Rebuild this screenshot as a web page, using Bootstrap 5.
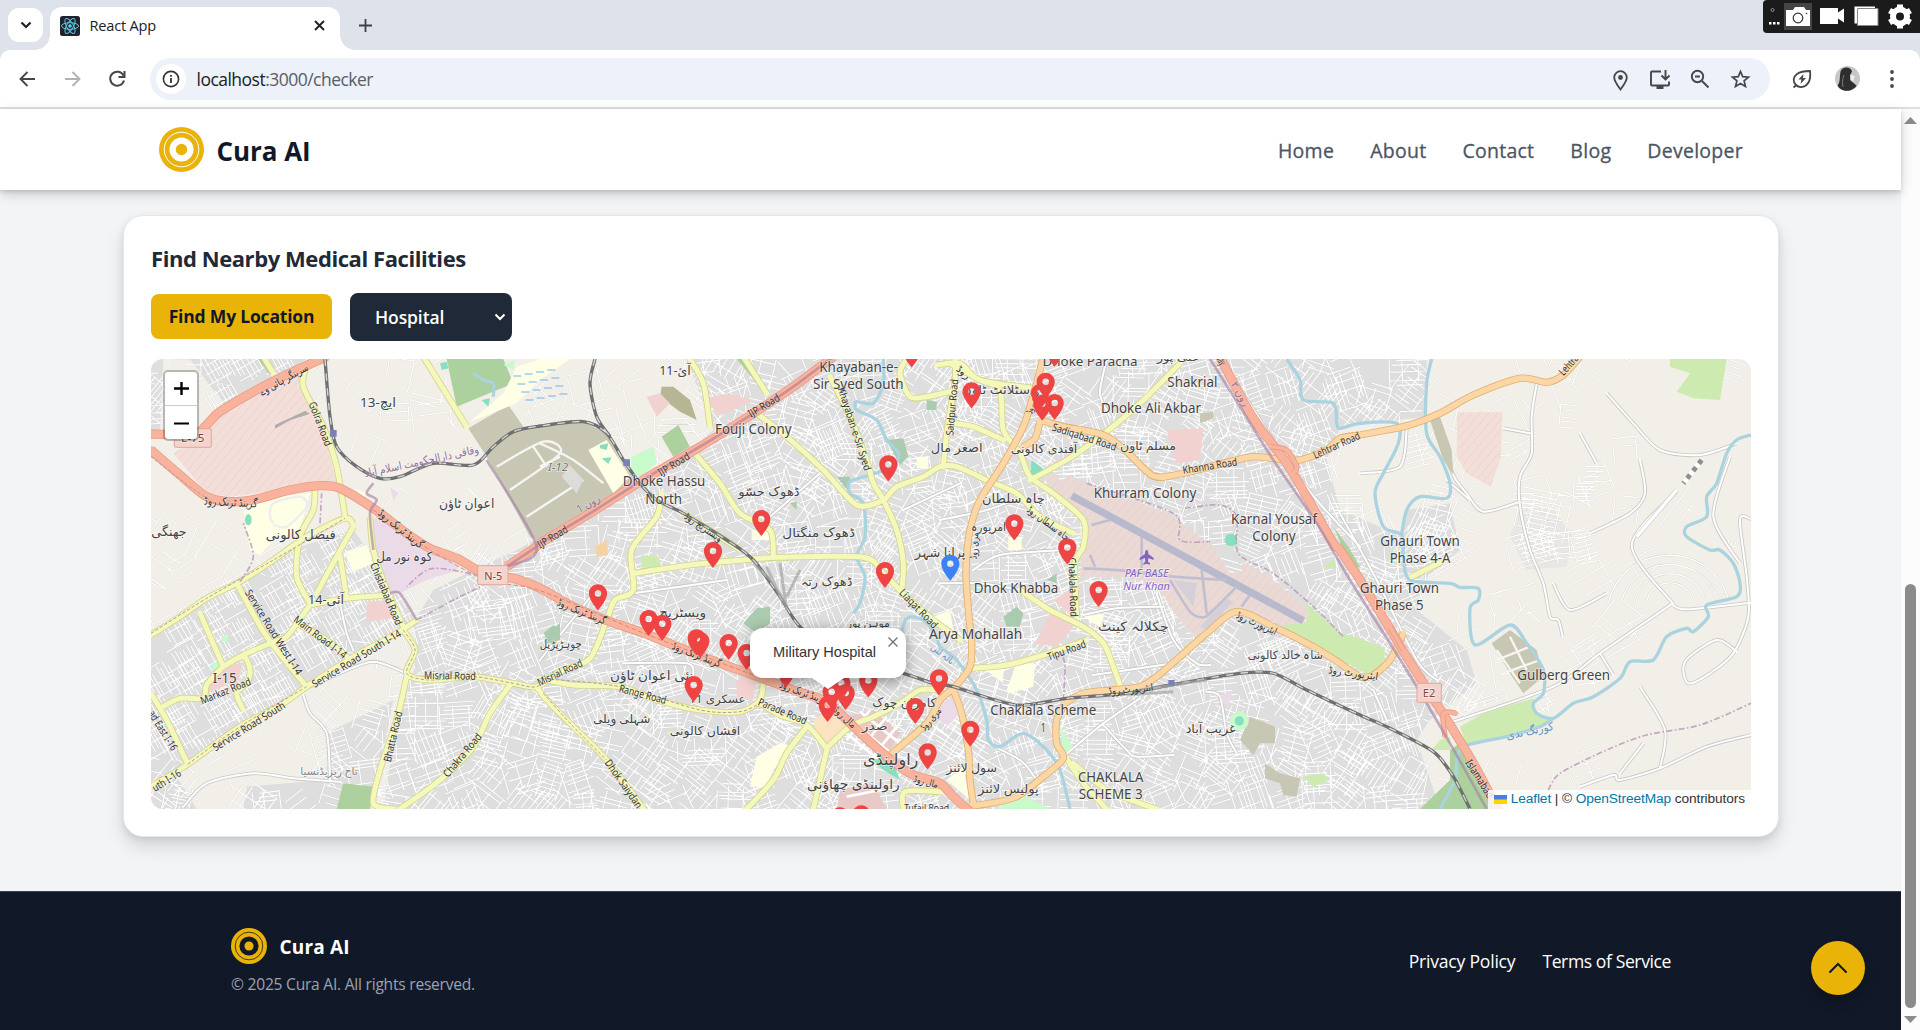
<!DOCTYPE html>
<html lang="en">
<head>
<meta charset="utf-8">
<title>React App</title>
<link rel="stylesheet" href="https://cdn.jsdelivr.net/npm/bootstrap@5.3.0/dist/css/bootstrap.min.css">
<style>
body{height:1030px;width:1920px;overflow:hidden;font-family:"Open Sans","Noto Sans",sans-serif;background:#fff;color:#1f2937}
svg{display:block;flex:none}
.tabstrip{height:50px;background:#dee2ea;padding-left:8px;padding-top:8px}
.tab-search{width:35px;height:34px;border-radius:11px;background:#fff}
.tab-active{position:relative;width:290px;height:43px;margin:-1px 0 0 7px;background:#fff;border-radius:12px 12px 0 0;padding:0 15px 6px 10px}
.tab-active:before,.tab-active:after{content:"";position:absolute;bottom:0;width:15px;height:15px}
.tab-active:before{left:-15px;background:radial-gradient(circle at 0 0,transparent 14.5px,#fff 15px)}
.tab-active:after{right:-15px;background:radial-gradient(circle at 100% 0,transparent 14.5px,#fff 15px)}
.tab-title{font-size:14.6px;letter-spacing:-.2px;color:#202124;margin-left:9.5px}
.capture-bar{position:absolute;right:0;top:0}
.toolbar-wrap{background:#dee2ea}
.toolbar{height:57px;background:#fff;border-radius:10px 10px 0 0;padding-left:15px}
.omnibox{width:1620px;height:42px;border-radius:21px;background:#ecf1fa;padding:0 18px 0 6px}
.info-dot{width:30px;height:30px;border-radius:50%;background:#fff}
.url{font-size:17.5px;letter-spacing:-.52px;color:#5a5d62;padding-top:2px}
.url b{font-weight:400;color:#202124}
.page-line{height:2px;background:#dfdfe0}
.viewport{height:921px}
.page{width:1901px;background:#f3f4f6}
.site-head{height:81px;background:#fff;padding:0 158px 0 159px;position:relative;z-index:2;box-shadow:0 4px 12px rgba(0,0,0,.17),0 2px 4px rgba(0,0,0,.12)}
.brand-name{font-size:26px;font-weight:700;color:#111827;letter-spacing:-.05px;padding-top:4px}
.menu-link{font-size:19.5px;font-weight:500;letter-spacing:.27px;-webkit-text-stroke:.3px #4b5563;color:#4b5563;text-decoration:none;white-space:nowrap;padding-top:3px}
.facility{width:1656px;height:622px;margin:25px 0 0 123px;border:1px solid #e5e7eb;border-radius:20px;background:#fff;padding:26px 27px;box-shadow:0 10px 18px rgba(0,0,0,.12),0 3px 7px rgba(0,0,0,.08)}
.facility h2{font-size:22px;font-weight:700;line-height:36px;letter-spacing:-.43px;margin:-2px 0 17px}
.locate{width:181px;height:45px;border:0;border-radius:8px;background:#eab308;color:#111827;font-weight:700;font-size:17.5px;letter-spacing:-.19px;padding:0;white-space:nowrap;margin-bottom:2px}
.kind{width:162px;height:48px;border-radius:8px;background:#1f2937;color:#fff;font-size:17.5px;font-weight:600;padding:0 6px 0 25px;letter-spacing:-.1px}
.mapbox{width:1600px;height:450px;margin-top:18px;border-radius:12px;overflow:hidden;position:relative;background:#f2efe9}
.zoomer{position:absolute;left:12px;top:11px;width:36px;height:71px;border:2px solid rgba(0,0,0,.24);border-radius:5px;background:#fff;background-clip:padding-box}
.zoomer div{height:34px}
.zoomer div:first-child{border-bottom:1px solid #ccc}
.bubble{position:absolute;left:599px;top:269px;width:156px;height:50px;padding:0 7px 3px 0;border-radius:13px;background:#fff;box-shadow:0 3px 14px rgba(0,0,0,.4);font:14.6px "Liberation Sans",sans-serif;color:#333}
.bubble:after{content:"";position:absolute;left:62px;top:50px;border:16px solid transparent;border-top:11px solid #fff;border-bottom:0}
.bubble svg{position:absolute;right:8px;top:9px}
.credit{position:absolute;right:0;bottom:0;height:19px;padding:0 6px;background:rgba(255,255,255,.8);font:13.7px/18px "Liberation Sans",sans-serif;color:#333;white-space:nowrap;letter-spacing:-.1px}
.credit span{margin-top:-2px}
.credit a{color:#0078a8;text-decoration:none}
.site-foot{height:139px;margin-top:54px;border-top:1px solid #374151;background:#111827;padding:0 230px 0 231px;position:relative}
.foot-name{font-size:19px;font-weight:700;color:#fff;letter-spacing:.15px;padding-top:3px}
.copy{font-size:15.6px;letter-spacing:-.24px;color:#9ca3af;margin-top:8px;line-height:24px}
.foot-link{font-size:17.6px;color:#fff;text-decoration:none;letter-spacing:-.42px;white-space:nowrap}
.foot-link.wide{letter-spacing:-.23px}
.to-top{position:absolute;left:1811px;top:49px;width:54px;height:54px;border-radius:50%;background:#eab308;box-shadow:0 8px 12px rgba(0,0,0,.2)}
.sbar{width:19px;background:#fcfcfc;padding-top:8px}
.sbar i{display:block;width:11px;height:424px;border-radius:6px;background:#8b8b8b;margin-top:460px}
</style>
<script src="https://cdn.jsdelivr.net/npm/bootstrap@5.3.0/dist/js/bootstrap.bundle.min.js"></script>
</head>
<body class="d-flex flex-column">
<div class="tabstrip d-flex align-items-start">
  <div class="tab-search d-flex align-items-center justify-content-center"><svg width="14" height="14" viewBox="0 0 14 14" fill="none" stroke="#202124" stroke-width="2.2"><path d="M2.5 4.5 7 9l4.500-4.500"/></svg></div>
  <div class="tab-active d-flex align-items-center">
    <svg width="20" height="20" viewBox="0 0 20 20"><rect width="20" height="20" rx="2.500" fill="#20232a"/><g fill="none" stroke="#5cc5de" stroke-width="1"><ellipse cx="10" cy="10" rx="8.500" ry="3.300"/><ellipse cx="10" cy="10" rx="8.500" ry="3.300" transform="rotate(60 10 10)"/><ellipse cx="10" cy="10" rx="8.500" ry="3.300" transform="rotate(120 10 10)"/></g><circle cx="10" cy="10" r="1.700" fill="#61dafb"/></svg>
    <span class="tab-title me-auto">React App</span>
    <svg width="11" height="11" viewBox="0 0 11 11" stroke="#202124" stroke-width="1.900"><path d="m1 1 9 9m0-9-9 9"/></svg>
  </div>
  <svg style="margin:11px 0 0 19px" width="13" height="13" viewBox="0 0 13 13" stroke="#3c4043" stroke-width="1.800"><path d="M6.500 0v13M0 6.500h13" /></svg>
  <svg class="capture-bar" width="157" height="33" viewBox="0 0 157 33"><path d="M4 0h153v33H4a4 4 0 0 1-4-4V4a4 4 0 0 1 4-4z" fill="#1b1b1b"/><path d="M21 3h28v27H21z" fill="#444"/><circle cx="9.500" cy="10" r="1.500" fill="none" stroke="#aaa" stroke-width=".8"/><path d="M6 22h2.500v2.500H6zm4 0h2.500v2.500H10zm4 0h2.500v2.500H14zM23 10h7l2-3h9l2 3h4v16H23zM57 8h18v4.500l6-4v14l-6-4V24H57z" fill="#fff"/><circle cx="35" cy="18" r="4.800" fill="#fff" stroke="#333" stroke-width="1.200"/><circle cx="43.500" cy="13.500" r=".8" fill="#333"/><path d="M91.500 6.500H112v17H91.500z" fill="#fff"/><path d="M94.500 8.500H115v17H94.500z" fill="#fff" stroke="#888"/><circle cx="137" cy="16.500" r="7" fill="none" stroke="#fff" stroke-width="6"/><g stroke="#fff" stroke-width="6"><path d="M137 4.500v4m0 16v4M126.600 10.500l3.500 2m13.800 8 3.500 2M126.600 22.500l3.500-2m13.800-8 3.500-2"/></g></svg>
</div>
<div class="toolbar-wrap">
<div class="toolbar d-flex align-items-center">
  <svg width="24" height="24" viewBox="0 0 24 24" fill="none" stroke="#474747" stroke-width="1.900"><path d="M20 12H6M12.500 5l-7 7 7 7"/></svg>
  <svg style="margin-left:21px" width="24" height="24" viewBox="0 0 24 24" fill="none" stroke="#b0b2b5" stroke-width="1.900"><path d="M5 12h14M12.500 5l7 7-7 7"/></svg>
  <svg style="margin-left:21px" width="24" height="24" viewBox="0 0 24 24" fill="none" stroke="#474747" stroke-width="2"><path d="M18.500 8.500A7 7 0 1 0 19 13.500M19.500 4v6h-6"/></svg>
  <div class="omnibox d-flex align-items-center" style="margin-left:21px">
    <div class="info-dot d-flex align-items-center justify-content-center"><svg width="18" height="18" viewBox="0 0 18 18"><circle cx="9" cy="9" r="7.600" fill="none" stroke="#333" stroke-width="1.600"/><path d="M8.100 8h1.800v5H8.100zM8.100 5h1.800v1.800H8.100z" fill="#333"/></svg></div>
    <span class="url me-auto" style="margin-left:10.500px"><b>localhost</b>:3000/checker</span>
    <div class="d-flex gap-3">
    <svg width="24" height="24" viewBox="0 0 24 24"><path d="M12.500 22.500C8.500 17 6.200 14 6.200 10.500a6.300 6.300 0 0 1 12.600 0c0 3.500-2.300 6.500-6.300 12z" fill="none" stroke="#474747" stroke-width="1.800"/><circle cx="12.500" cy="10.500" r="2.400" fill="#474747"/></svg>
    <svg width="24" height="24" viewBox="0 0 24 24" fill="none" stroke="#474747" stroke-width="1.900"><path d="M13 4.500H4a1 1 0 0 0-1 1v12a1 1 0 0 0 1 1h16a1 1 0 0 0 1-1v-3M17.500 3v9M13.500 8.500l4 4 4-4"/><path d="M8.500 20.500h7" stroke-width="3"/></svg>
    <svg width="24" height="24" viewBox="0 0 24 24" fill="none" stroke="#474747" stroke-width="1.900"><circle cx="9.500" cy="9.500" r="5.700"/><path d="m14 14 6.500 6.500M7 9.500h5"/></svg>
    <svg width="24" height="24" viewBox="0 0 24 24" fill="none" stroke="#474747" stroke-width="1.700"><path d="m12.500 4.500 2.200 5.200 5.800.5-4.400 3.700 1.400 5.600-5-3-5 3 1.400-5.600-4.400-3.700 5.800-.5z"/></svg>
    </div>
  </div>
  <svg style="margin-left:20px" width="24" height="24" viewBox="0 0 24 24" fill="none" stroke="#474747" stroke-width="1.800"><path d="M20 4c.5 4 .5 8-1.500 11.500-3 5-9 6-12.500 2.500s-3-8 1-11C10.500 4.500 15 4 20 4zM3.500 20.500 7 17.500"/><path d="m13.500 7-5 5.500h3l-1 4.500 5.500-6h-3z" fill="#474747" stroke="none"/></svg>
  <svg style="margin-left:21px" width="25" height="25" viewBox="0 0 25 25"><circle cx="12.500" cy="12.500" r="12.500" fill="#c7c7c7"/><path d="M5.500 5.500C7 0 16 0 17 5.500l-2 4 .5 5 6 5c-3 6-15 8-19 0 3-3 2-9 3-14z" fill="#2e2e2e"/><path d="M15.500 8.500l4 1.500-1 5-3-1z" fill="#eee"/><path d="M9 9c-1.500 4-2 8-1 12" stroke="#777" fill="none"/></svg>
  <svg style="margin-left:20px" width="24" height="24" viewBox="0 0 24 24" fill="#474747"><circle cx="12" cy="5" r="1.900"/><circle cx="12" cy="12" r="1.900"/><circle cx="12" cy="19" r="1.900"/></svg>
</div></div>
<div class="page-line"></div>
<div class="viewport d-flex">
<main class="page">
  <header class="site-head d-flex align-items-center">
    <svg width="45" height="45" viewBox="0 0 45 45"><circle cx="22.500" cy="22.500" r="22.500" fill="#eab308"/><circle cx="22.500" cy="22.500" r="17.300" fill="none" stroke="#fff"/><circle cx="22.500" cy="22.500" r="12" fill="#fff"/><circle cx="22.500" cy="22.500" r="5.700" fill="#eab308"/></svg>
    <span class="brand-name me-auto" style="margin-left:12.500px">Cura AI</span>
    <nav class="d-flex" style="gap:36px"><a class="menu-link">Home</a><a class="menu-link">About</a><a class="menu-link">Contact</a><a class="menu-link">Blog</a><a class="menu-link">Developer</a></nav>
  </header>
  <section class="facility">
    <h2>Find Nearby Medical Facilities</h2>
    <div class="d-flex align-items-center" style="gap:18px">
      <button class="locate">Find My Location</button>
      <div class="kind d-flex align-items-center justify-content-between"><span>Hospital</span><svg width="12" height="12" viewBox="0 0 12 12" fill="none" stroke="#fff" stroke-width="2"><path d="m1.500 3.500 4.500 4.500 4.500-4.500"/></svg></div>
    </div>
    <div class="mapbox">
      <svg id="map" width="1600" height="450" viewBox="33 27 4800 1350"></svg>
      <div class="zoomer"><div class="d-flex align-items-center justify-content-center"><svg width="15" height="15" viewBox="0 0 15 15" stroke="#000" stroke-width="2.400"><path d="M7.500 1v13M0 7.500h15"/></svg></div><div class="d-flex align-items-center justify-content-center"><svg width="15" height="15" viewBox="0 0 15 15" stroke="#000" stroke-width="2"><path d="M0 7.500h15"/></svg></div></div>
      <div class="bubble d-flex align-items-center justify-content-center">Military Hospital<svg width="10" height="10" viewBox="0 0 10 10" stroke="#757575" stroke-width="1.400"><path d="m.5.5 9 9m0-9-9 9"/></svg></div>
      <div class="credit d-flex align-items-center"><svg class="me-1" width="13" height="9" viewBox="0 0 13 9"><path fill="#4c7be1" d="M0 0h13v5H0z"/><path fill="#ffd500" d="M0 4.500h13V9H0z"/></svg><span><a href="#">Leaflet</a> | © <a href="#">OpenStreetMap</a> contributors</span></div>
    </div>
  </section>
  <footer class="site-foot d-flex align-items-center justify-content-between">
    <div class="d-flex flex-column" style="padding-top:2px">
      <div class="d-flex align-items-center"><svg width="36" height="36" viewBox="0 0 45 45"><circle cx="22.500" cy="22.500" r="22.500" fill="#eab308"/><circle cx="22.500" cy="22.500" r="17.300" fill="none" stroke="#111827"/><circle cx="22.500" cy="22.500" r="12" fill="#111827"/><circle cx="22.500" cy="22.500" r="5.700" fill="#eab308"/></svg><span class="foot-name" style="margin-left:12.500px">Cura AI</span></div>
      <div class="copy">© 2025 Cura AI. All rights reserved.</div>
    </div>
    <div class="d-flex" style="gap:27px"><a class="foot-link wide">Privacy Policy</a><a class="foot-link">Terms of Service</a></div>
    <div class="to-top d-flex align-items-center justify-content-center"><svg width="20" height="20" viewBox="0 0 20 20" fill="none" stroke="#111827" stroke-width="2" stroke-linecap="round"><path d="m2 14 8-8 8 8"/></svg></div>
  </footer>
</main>
<aside class="sbar d-flex flex-column align-items-center"><svg width="13" height="7" viewBox="0 0 13 7"><path fill="#8b8b8b" d="M6.500 0 13 7H0z"/></svg><i></i><svg style="margin-top:8px" width="13" height="7" viewBox="0 0 13 7"><path fill="#8b8b8b" d="M6.500 7 13 0H0z"/></svg></aside>
</div>
<script>
// The map is laid out in four sheets A-D, each 1200 units wide.
const out=[];let seed=7;
const rnd=()=>(seed=(seed*16807)%2147483647)/2147483647;
const OFF={A:0,B:1200,C:2400,D:3600};
const pts=s=>OFF[s[0]]===undefined?[]:s.split(/(?=[ABCD])/).flatMap(q=>q.slice(1).trim().split(/\s+/).map(p=>{const a=p.split(',').map(Number);return[a[0]+OFF[q[0]],a[1]]}));
const poly=s=>'M'+pts(s).map(p=>p.join()).join('L')+'Z';
const curve=s=>{const p=pts(s);let d='M'+p[0];for(let i=0;i<p.length-1;i++){const a=p[i-1]||p[i],b=p[i],c=p[i+1],e=p[i+2]||c;d+=`C${[b[0]+(c[0]-a[0])/7,b[1]+(c[1]-a[1])/7,c[0]-(e[0]-b[0])/7,c[1]-(e[1]-b[1])/7,c[0],c[1]].map(v=>v.toFixed(1))}`}return d};
const fill=(c,...l)=>out.push(`<path fill="${c}" d="${l.map(poly).join('')}"/>`);
const line=(d,c,w,x='')=>out.push(`<path fill="none" stroke="${c}" stroke-width="${w}" stroke-linejoin="round" ${x} d="${d}"/>`);
const road=(l,edge,core,w)=>{const d=l.map(curve).join('');line(d,edge,w);line(d,core,w-5,'stroke-linecap="round"')};
const inside=(x,y,P)=>{let r=false;for(let i=0,j=P.length-1;i<P.length;j=i++){const a=P[i],b=P[j];if((a[1]>y)!==(b[1]>y)&&x<(b[0]-a[0])*(y-a[1])/(b[1]-a[1])+a[0])r=!r}return r};

const towns=[
 'A820,820 880,720 1000,660 1190,590 B300,400 450,300 520,240 440,27 D260,27 255,200 0,230 -40,330 0,480 190,560 200,480 330,460 360,600 250,690 230,780 380,900 410,1000 270,1110 230,1170 300,1377 A730,1377 770,1110 820,970 830,900',
 'A33,860 200,740 300,690 480,590 640,540 770,720 830,810 500,1010 140,1245 33,1310',
 'A150,27 500,27 400,90 250,160','A320,1310 560,1290 560,1150 660,1100 760,1050 720,1260 690,1377 310,1377','A33,1330 110,1280 170,1377 33,1377','A1000,660 1130,600 1200,560 1260,720 1100,700','A33,27 70,27 60,240 33,240',
 'D510,560 540,470 640,480 700,560 680,650 560,660'];
towns.slice(0,7).forEach(t=>fill('#dedede',t));
fill('#e9e7e3',towns[7]);
let streets='';
const seg=(a,b,c,d)=>streets+=`M${a.toFixed(0)},${b.toFixed(0)}L${c.toFixed(0)},${d.toFixed(0)}`;
const block=(cx,cy,w,h,ang,sp,keep=.8)=>{const t=ang*Math.PI/180,C=Math.cos(t),S=Math.sin(t),q=(u,v)=>[cx+u*C-v*S,cy+u*S+v*C];
 for(let v=-h/2;v<=h/2;v+=sp*(.7+rnd()*.6))if(rnd()<keep)seg(...q(-w/2*(.5+rnd()*.5),v),...q(w/2*(.4+rnd()*.6),v));
 for(let u=-w/2;u<=w/2;u+=sp*(2+rnd()*2.5))seg(...q(u,-h/2*(.6+rnd()*.5)),...q(u,h/2*(.6+rnd()*.5)));};
const TP=towns.map(pts);
for(let x=40;x<4850;x+=92)for(let y=40;y<1390;y+=88){const px=x+rnd()*40-20,py=y+rnd()*40-20;
 const k=TP.findIndex(P=>inside(px,py,P));
 if(k===1||k===2)block(px,py,100,95,60,12,.9);
 else if(k>=0)block(px,py,88+rnd()*60,75+rnd()*60,[-25,12,65,-8,30,-60][Math.floor(rnd()*6)]+rnd()*10,11+rnd()*9,.78);
 else if(px<1250&&rnd()<.6||px>1300&&px<4500&&rnd()<.35)block(px,py,70+rnd()*60,60+rnd()*70,rnd()*90-45,24+rnd()*14,.55);}
// planned estates on the eastern side
[[230,310,110,110,-15,15],[270,540,120,120,-65,12],[300,620,150,90,-30,12],[610,500,160,150,12,14],[580,600,150,110,-15,13],[740,590,80,110,-15,14],[760,370,80,80,0,17],[735,430,70,60,0,13],[690,200,60,70,5,17],[1180,70,60,70,20,17],[430,1060,150,30,-17,10],[620,1050,50,50,-30,12],[560,460,100,60,0,14],[760,690,210,120,-30,38],[860,860,220,60,-30,35],[720,930,180,70,-30,34],[1010,510,230,60,-52,38],[920,640,80,60,-30,25],[1190,580,20,50,-80,30]].forEach(b=>block(b[0]+3600,b[1],...b.slice(2),1));
line(streets,'#c9c8c7',5,'opacity=".6"');line(streets,'#fff',3.4);
for(let i=0;i<4;i++){const r=70+i*38;line(`M${4590-r},${760}A${r},${r*.95} 0 0 1 ${4590+r*.95},${745}`,'#cfcfcf',6);line(`M${4590-r},${760}A${r},${r*.95} 0 0 1 ${4590+r*.95},${745}`,'#fff',4);}
road(['D280,210 310,300 345,385 380,430 430,485 540,455','D590,100 575,200 575,310 540,380 540,470 570,600 610,700 630,800 655,810 668,860','D900,330 915,430 870,490 750,550','D998,760 875,585 1010,425','D998,760 780,910 640,1010 340,1115','D1000,765 1040,778 1233,758','D1233,507 1200,510 1220,680 1225,800 1180,910 1110,970 1045,1000 1035,935 1130,870 1190,905','D780,910 820,975','D720,1310 820,1275 840,1290 960,1255 1100,1190 1233,1155','A490,1035 510,1090 560,1150 570,1290','A130,1370 200,1300 340,1270 460,1285 600,1295','A510,1010 600,970 700,935 800,970','C370,1220 490,1120 600,1045','C490,1125 560,1200 590,1220 700,1215','C650,730 700,870 770,940 810,945','C430,795 530,775 670,770','C800,1025 840,1040 860,1150 890,1210','C500,30 480,130 510,200','B690,500 840,370','B0,930 160,730','B1090,480 1260,400','C0,510 140,480 250,440','C100,660 180,615 370,600','C460,975 700,940','B250,940 440,940 460,980','B280,730 560,690','C120,1170 240,1230 290,1290','D0,490 110,690 230,930 290,990','D140,1110 100,1020','D320,390 390,450','C0,700 120,700 240,720','A600,760 620,850 640,900','C1260,590 1130,450 1020,300 890,100 850,30','D640,700 690,780 800,730','D800,130 880,220 960,300 1080,315 1190,280','D1170,320 1120,500 1200,640','D60,370 180,350 200,240','D490,235 570,250','D960,1255 975,1140 900,1010','D720,250 770,340','D910,1180 840,1270'],'#c9c8c7','#fff',11);
line(curve('D1085,330 1030,400'),'#fff',15);line(curve('D1085,330 1030,400'),'#8f8f8f',15,'stroke-dasharray="14 14"');line(curve('D1010,420 890,560'),'#ccc',14);line(curve('D1010,420 890,560'),'#fff',10);

fill('#f3dfd9','A100,310 180,260 240,190 350,130 500,60 490,120 550,240 590,400 540,405 270,440 200,430','D352,187 487,187 483,320 452,410 380,370 350,320');
out.push('<defs><pattern id="hz" width="20" height="20" patternUnits="userSpaceOnUse" patternTransform="rotate(-50)"><path d="M0 0H20" stroke="#eebdb5" stroke-width="2"/></pattern></defs>');
fill('url(#hz)','A100,310 180,260 240,190 350,130 500,60 490,120 550,240 590,400 540,405 270,440 200,430','D352,187 487,187 483,320 452,410 380,370 350,320');
fill('#ebdbe8','A700,510 720,490 850,590 970,640 940,665 860,690 780,730 750,730 710,640','A750,410 775,430 760,450','C0,1060 40,1040 60,1090 10,1125 0,1110','C840,1040 880,1020 860,1075','B1200,1060 1240,1040 1260,1090 1220,1130');
fill('#c7c7b4','A985,235 1105,165 1150,230 1200,228 B130,215 200,250 240,330 290,400 150,480 0,575 -30,560 -160,320','D455,880 510,840 590,900 610,980 550,1030 510,970','D270,210 300,200 335,300 340,375 310,330','C930,1100 1005,1130 1005,1180 960,1180 940,1215 900,1170','C975,1240 1020,1270 1080,1285 1070,1340 1030,1335 1020,1300 975,1285','C780,190 820,185 820,205 780,220');
line(['A1070,350 1210,275 1260,310 1110,420','A1180,290 1220,350','A1160,500 1330,390','B0,280 100,330 190,400','B0,350 60,320','D470,900 540,1000','D470,930 570,890','D510,860 560,960','D490,970 600,930'].map(curve).join(''),'#f6f5f2',7);
fill('#b5b693','B365,110 400,110 450,150 470,210 420,185 360,140');
fill('#dcdcd8','B65,380 90,345 130,390 110,430');
fill('#add19e','A920,27 1090,27 1120,100 950,170','A590,1377 610,1300 700,1310 690,1377','A355,27 375,27 400,75 385,70','B365,260 415,225 450,290 400,320','B590,27 620,27 665,90 650,100','D240,1377 330,1290 330,1200 360,1180 480,1377','D0,560 75,690 60,690 0,595','C1180,530 1225,590 1260,650 1240,660');
fill('#ffffe5','A990,215 1090,130 1130,50 1200,27 B90,27 0,90 -70,160','A310,480 410,440 510,430 480,540 400,570 360,615 330,600','A615,605 680,585 700,640 640,665','A645,415 680,430 670,445','B145,300 200,270 270,380 220,430','B630,1310 650,1220 720,1180 760,1190 700,1260 680,1310','C130,955 190,945 190,1000','C200,1020 230,940 285,940 280,1010 210,1030','C20,1290 70,1250 90,1350','B635,570 635,540 690,545 690,570','B1130,320 1165,320 1165,355 1130,355','C205,560 245,560 245,600 205,600','C430,800 495,790 480,830','B1180,800 1230,780 1240,840');
line(curve('A400,520 390,500 400,460 480,440 500,470 440,530 400,525'),'#eee',7);
fill('#f2d2d0','A680,755 750,750 755,805 680,815','A200,1030 225,960 310,935 295,990','B320,140 360,130 390,160 350,200','B500,145 560,130 640,150 560,190 530,195','B590,990 650,970 640,1050 590,1040','C285,880 340,770 400,830 350,890','C340,750 400,715 400,800','C680,240 790,235 780,330 710,340');
fill('#e8c9c6','B880,1110 1000,1080 1080,1150 1040,1220 960,1160','B900,1320 1000,1300 1040,1377 890,1377');
line('M2095,1130L2235,1245M2125,1105L2260,1215M2160,1085L2280,1180M2120,1170L2190,1080M2160,1200L2240,1100M2195,1225L2270,1130M2120,1340L2220,1320','#fff',8);
fill('#fbe2c0','B820,1110 870,1080 930,1130 870,1190 830,1150');fill('#f3d3a4','B165,590 200,570 205,615 170,620');
fill('#aacbaf','B610,820 650,775 690,770 690,820 650,850','B1040,270 1090,265 1105,320 1080,345','B890,380 930,380 930,430','B15,850 60,820 60,870 20,880','C190,800 230,770 250,790 240,830 200,830','C320,690 350,670 350,700','B1160,150 1190,155 1190,180 1160,180','A1210,850 1240,825 1260,850 1240,890','B750,460 770,455 770,480');
fill('#88dfbf','C270,380 275,330 315,360 300,380','B1000,1230 1050,1215 1080,1290 1030,1260','B180,285 205,280 200,300 180,295','B185,325 215,322 205,342','A900,40 920,35 925,55 905,60','A1025,150 1050,145 1045,170');
fill('#c8facc','B275,320 340,290 350,340 300,380 275,370','C360,1130 400,1190 370,1215','C190,1360 260,1340 330,1377 180,1377','A215,940 240,935 235,965 215,960','A240,870 265,850 265,880','A1090,45 1125,30 1120,60');
fill('#cdebb0','C1020,828 1100,815 1100,760 1200,850 D60,865 135,895 130,950 80,970 0,930','D360,1130 430,1090 580,1045 590,1090 640,1105 610,1130 380,1185','D990,27 1160,27 1140,150 1060,145 1010,125 1050,70 990,50','C1090,1280 1150,1270 1170,1290 1120,1310','B305,615 355,620 365,655 305,660','C1145,650 1180,630 1190,655','D275,1200 300,1170 330,1160 330,1200');
out.push('<g fill="#88dfbf"><circle cx="3273" cy="570" r="19"/><circle cx="3298" cy="1113" r="28" fill="#c8facc"/><circle cx="3298" cy="1113" r="14"/><ellipse cx="325" cy="509" rx="10" ry="17"/></g>');
const air='C310,380 350,370 360,395 390,375 440,400 560,440 700,500 820,590 870,670 905,668 910,635 1000,690 1060,740 1110,790 1090,820 1030,825 890,785 770,870 690,770 650,700 540,680 420,680 430,590 440,520 400,480 340,430';
fill('#eadad6',air);fill('url(#hz)',air);
line('M2795,437L3490,812','#b9b9ce',22);
line(curve('C430,655 550,662 700,680 860,690')+curve('C605,560 605,655')+curve('C455,525 510,510')+curve('C450,615 465,650')+curve('C785,660 800,790')+curve('C690,690 750,785 790,802 820,780 890,710')+curve('C905,770 930,735'),'#c0bfd2',8);
fill('#d5cfd8','C700,690 770,700 760,770','C780,830 860,745 880,755 800,840');
for(let i=0;i<16;i++){const x=1120+(i%4)*34+Math.floor(i/4)*12,y=60+Math.floor(i/4)*24+(3-i%4)*6;line(`M${x},${y}h24`,'#6db3ef',3)}
line(curve('A1000,70 1030,90 1060,100 1060,140'),'#aad3df',9);

line(['B1030,27 1030,100 1000,160 950,155 950,180 1010,210 1040,270 1075,310 1060,350 990,375 930,395 930,430 970,460 975,560 950,620 975,680 960,760 940,790','B1080,870 1100,805 1150,810 1190,860 C0,890 50,930 110,1020 140,1110 145,1170 180,1190 250,1150 320,1200 360,1260 390,1377','C1040,27 1080,90 1090,150 1180,160 1190,220 D0,235 60,220 170,220 175,280 130,370 105,430 130,530 185,555 190,620 210,690 330,700 360,712 415,715 415,750 390,775 405,885 510,825 560,880 610,960 610,1030 580,1060 590,1090 640,1105 700,1060 760,1040 840,985 870,935 940,930 980,860 1040,835 1060,845 1105,800 1100,765 1190,740 1200,700 1180,640 1140,600 1110,600 1040,560 1040,530 1100,500 1100,440 1130,400 1160,310 1190,270 1233,255','D275,27 260,100 260,250 300,320 330,400 320,445 240,440 200,480 185,555','D640,1105 600,1130 500,1160 370,1190 350,1240 345,1290 300,1377'].map(curve).join(''),'#aad3df',10);
road(['A500,45 490,110 550,230 590,350 615,500','A525,420 520,480 480,560 470,680 510,760','A640,530 590,620 530,730','A600,615 610,680 620,745','A510,765 620,745 750,735','A33,855 120,800 200,745 300,695 400,630 500,560 615,505 640,525','A290,700 380,860 500,1010','A510,765 470,820 440,860 390,880 310,915 250,950','A180,790 215,870 250,950','A690,500 700,600 740,720 790,830','A830,810 770,850 650,915 500,1010 430,1060 300,1130 140,1245 33,1310','A33,1030 80,1110 140,1235','A60,1075 120,1045 190,1045 200,1005 250,950 310,920 330,960 320,1000 290,1030 310,1080','A470,820 560,870 620,920','A790,840 825,900 800,970 870,990 1000,980 1120,1000 1190,1010 B60,965 150,925 200,810 225,750 280,720 275,600 350,500 365,430','A800,980 770,1110 720,1260 700,1360 760,1377','A1110,1005 1050,1090 1000,1190 900,1290 780,1377','A1190,1010 B20,1050 100,1130 200,1230 320,1390','A850,20 980,230','A370,20 400,70',
'B445,20 490,100 510,230','B465,310 540,400 600,490 690,540 700,620','B280,670 450,645 610,630 720,622 970,622 1030,670 1090,730 1180,810 1260,870','B610,20 680,130','B650,190 740,260 850,360 950,465 1030,450 1070,410 1150,380 C0,350 50,350 150,395 230,430 300,500 400,550','B870,80 930,200 980,330 1000,400 1030,450 1070,540 1090,640 1085,730','B1100,27 1080,70 1110,140 1160,140 1230,125','B1245,30 1245,90 1220,250 1210,350','B0,985 100,1005 240,1010 350,1050 480,1080 600,1085 660,1050 670,990','B660,1060 720,1095 800,1125 860,1195','B860,1195 930,1130 1000,1100 1080,1060 1140,1020 1200,1020','B800,1130 740,1210 700,1290 620,1377','B860,1200 840,1290 820,1377','B1090,1377 1095,1325 1200,1325',
'C30,40 120,90 180,120 190,240 240,310 270,380 340,430 430,510 430,590 405,640 410,800','C270,390 380,330 480,260 600,160 720,40','C-10,45 60,40 120,90 280,115','C240,720 330,780 430,830 490,880 520,950 540,1005','C90,955 200,945 310,915 440,870','C380,1225 430,1300 500,1377','C400,1240 500,1320 600,1360 650,1377','C40,220 100,230 190,270','D215,680 305,635','B600,600 540,560 430,490'],'#d3d38d','#f5f8bb',20);
road(['C300,210 370,230 490,255 560,305 640,378 720,372 830,345 940,320 1020,328 1080,330 1160,300 1200,265 D60,255 140,240 210,225 300,190 400,135 540,85 620,97 670,75 720,20','C310,20 290,100 250,230 190,340 120,450 90,540 78,660 85,780 95,880 90,950 50,1005 0,1050 B1160,1120 1050,1215','C300,215 285,265 250,290','C375,1060 430,1030 520,1020 600,1010 650,980 720,920 800,850 890,785 1000,830 1120,890 1200,940 D60,980 100,975 150,930 190,850','C375,1060 350,1110 350,1180 370,1225 310,1280 230,1340 150,1360 90,1368','C40,1020 65,1090 85,1200 90,1290 100,1360'],'#dfb070','#fcd6a4',22);
road(['A33,252 105,255 150,270 200,225 240,185 350,120 470,60 560,20','A33,300 120,375 200,440 270,455 350,447 450,420 540,407 600,415 700,475 800,550 870,595 950,625 1040,675 1120,685 1200,715 B100,770 210,815 300,845 400,885 500,925 640,975 760,1020 860,1055 920,1110 1000,1185 1060,1235 1120,1275 1200,1300 C40,1340 90,1385','A1100,650 1190,590 B0,580 150,490 300,395 480,290 640,190 760,110 880,20','C830,0 860,60 940,205 1040,340 1100,440 1180,580 D0,600 60,690 140,820 200,920 270,1030 340,1140 400,1240 480,1390'],'#e99c87','#f9b29c',28);
road(['D150,830 190,900','D315,1160 310,1090 350,1090','C990,290 1040,300 1070,350 1060,370'],'#e99c87','#f9b29c',16);
line(curve('A1100,650 1190,590 B0,580 150,490 300,395 480,290 640,190 760,110 880,20'),'#a87a9a',8,'opacity=".6"');
line(['B640,975 480,915 300,845 0,722 A1040,690 870,600 700,480'].map(curve).join(''),'#d98b78',3,'stroke-dasharray="14 7"');
// administrative boundaries
line(['C810,27 900,170 1000,330 1130,520 D30,690 200,960 330,1180 440,1377','A1100,650 1190,590 1040,330','A700,400 680,430 710,450 690,490 700,600','A830,810 780,730 750,730'].map(curve).join(''),'#a684a6',8,'opacity=".65"');
line(['D625,1320 660,1270 800,1200 920,1155 1080,1125 1233,1060','A830,810 940,750 1040,690 880,655 800,710','C440,400 700,490 C720,570 810,575','C735,475 840,465 890,500 895,610 1000,670 1120,770 1210,860','A300,695 340,620 310,520','C370,1050 375,950 365,910','A540,520 545,430'].map(curve).join(''),'#b795b7',5,'stroke-dasharray="18 7 5 7" opacity=".8"');
line(['A33,320 150,410 240,470','A790,840 825,900 800,970 870,990 1000,980 1120,1000 1190,1010 B60,965','A33,850 200,745 400,630 615,505','A500,1010 300,1130 140,1245','B0,985 240,1010 480,1080 600,1085 660,1060','B10,1030 100,1130 200,1230'].map(curve).join(''),'#b79a9a',3,'stroke-dasharray="10 6"');
const rail=['A555,27 570,200 590,290 650,350 720,385 780,380 880,340 1000,345 1060,290 1120,245 B0,228 130,215 200,250 250,330 300,400 350,450 430,490 560,570 640,630 720,740 780,830 900,920 1090,970 1180,1000 C40,1010 230,1065 380,1045 560,1030 690,1005 900,970 1000,970 1100,1020 D60,1095 150,1135 280,1205 340,1280 390,1377','B165,27 150,100 170,200 210,260'].map(curve).join('');
line(rail,'#707070',10);line(rail,'#d8d8d8',4,'stroke-dasharray="22 22"');
line(['B640,640 700,700 740,770','B780,660 740,740','B680,650 730,760','B720,640 740,780','C600,1020 800,990','C560,1035 700,1025'].map(curve).join(''),'#a5a5a5',9,'opacity=".7"');
fill('#7b80b5','A570,240 590,240 590,260 570,260','B250,328 270,328 270,348 250,348','C685,990 704,990 704,1007 685,1007');
out.push('<g fill="#aeaeae"><path d="M405,225l90-42 15 8-60 20-45 25z"/></g><g fill="#f3d3cc" stroke="#dfa89d" stroke-width="3"><rect x="103" y="236" width="111" height="56" rx="4"/><rect x="1013" y="647" width="91" height="57" rx="4"/><rect x="3831" y="1000" width="73" height="57" rx="4"/></g>');
out.push('<path fill="#8461c4" d="M3020,600c4 0 5 5 5 12l16 12v6l-16-6-1 11 6 5v4l-10-3-10 3v-4l6-5-1-11-16 6v-6l16-12c0-7 1-12 5-12z"/>');
// k, x, y, text, length, size, rotation, colour
const T=[['A',714,170,'ایچ-13',108,38],['A',980,474,'اعوان ٹاؤن',166,38],['A',87,557,'جھنگی',106,38],['A',482,566,'فیصل کالونی',210,38],['A',793,634,'کوہ نور مل',168,38],['A',558,762,'آئی-14',108,38],['A',254,999,'I-15',72,40],['A',567,1276,'تاج ریزیڈنسیا',172,32,0,'#888'],
['A',1060,690,'N-5',54,34,0,'#7a3b2e'],['A',158,276,'E-75',70,34,0,'#7a3b2e'],['A',845,343,'وفاقی دارالحکومت اسلام آباد',350,30,-12,'#93719a'],
['A',432,97,'سرینگر ہائی وے',160,28,-29,'#333'],['A',272,466,'گرینڈ ٹرنک روڈ',160,30,3,'#333'],['A',782,545,'گرینڈ ٹرنک روڈ',165,30,39,'#333'],['A',540,230,'Golra Road',140,28,69,'#333'],['A',738,740,'Chistiabad Road',200,28,67,'#333'],['A',400,855,'Service Road West I-14',295,28,58,'#333'],['A',540,870,'Main Road I-14',190,28,37,'#333'],['A',650,935,'Service Road South I-14',305,28,-31,'#333'],['A',327,1138,'Service Road South',250,28,-32,'#333'],['A',257,1032,'Markaz Road',160,28,-22,'#333'],['A',68,1150,'ad East I-16',135,28,58,'#333'],['A',80,1300,'uth I-16',95,28,-32,'#333'],['A',930,986,'Misrial Road',155,28,1,'#333'],['A',760,1168,'Bhatta Road',155,28,-77,'#333'],['A',968,1224,'Chakra Road',160,28,-50,'#333'],
['B',405,76,'آئ-11',95,38],['B',54,363,'I-12',60,32,0,'#777','i'],['B',640,253,'Fouji Colony',230,40],['B',372,409,'Dhoke Hassu',248,40],['B',371,461,'North',110,40],['B',956,66,'Khayaban-e-',236,40],['B',955,118,'Sir Syed South',272,40],['B',687,438,'ڈھوک حسّو',184,36],['B',836,560,'ڈھوک منگتال',218,36],['B',860,707,'ڈھوک رتہ',155,36],['B',428,800,'ویسٹریج',140,36],['B',62,893,'چوہڑپڑپل',126,34],['B',335,990,'نئی اعوان ٹاؤن',250,38],['B',245,1118,'شہلی ویلی',172,36],['B',495,1154,'افشاں کالونی',212,36],['B',532,1060,'عسکری 11',170,34],['B',985,832,'موہن پور',130,34],['B',1093,1071,'کامران چوک',192,36],['B',1004,1140,'صدر',78,34],['B',1052,1244,'راولپنڈی',166,48],['B',940,1318,'راولپنڈی چھاؤنی',278,40],['B',1200,620,'پرانا شہر',152,38],['B',1250,305,'اصغر مال',155,36],
['B',38,570,'IJP Road',100,28,-31,'#333'],['B',402,352,'IJP Road',105,28,-31,'#333'],['B',672,176,'IJP Road',105,28,-31,'#333'],['B',145,470,'زون 1',75,28,-30,'#93719a'],['B',125,793,'گرینڈ ٹرنک روڈ',155,28,22,'#333'],['B',470,923,'گرینڈ ٹرنک روڈ',155,28,21,'#333'],['B',790,1036,'گرینڈ ٹرنک روڈ',150,28,20,'#333'],['B',490,540,'ویسٹریج روڈ',130,26,34,'#333'],['B',60,977,'Misrial Road',145,28,-25,'#333'],['B',308,1042,'Range Road',145,28,15,'#333'],['B',727,1093,'Parade Road',155,28,23,'#333'],['B',250,1310,'Dhok Saiydan',170,28,55,'#333'],['B',943,245,'Khayaban-e-Sir Syed',260,27,72,'#333'],['B',1237,180,'Saidpur Road',170,27,-85,'#333'],['B',1135,785,'Liaqat Road',150,28,46,'#333'],['B',915,1110,'مال روڈ',80,26,42,'#333'],['B',1158,1303,'مال روڈ',75,26,15,'#333'],['B',1172,1115,'مری روڈ',80,26,-50,'#333'],['B',1160,1382,'Tufail Road',135,28,0,'#333'],['B',1208,920,'نالہ لئی',80,26,38,'#5f93c4'],
['C',450,47,'Dhoke Paracha',285,38],['C',757,111,'Shakrial',150,40],['C',633,190,'Dhoke Ali Akbar',300,40],['C',615,443,'Khurram Colony',308,40],['C',1002,522,'Karnal Yousaf',258,40],['C',1002,574,'Colony',130,40],['C',228,728,'Dhok Khabba',254,40],['C',107,867,'Arya Mohallah',280,40],['C',310,1094,'Chaklala Scheme',318,40],['C',310,1146,'1',15,38],['C',512,1295,'CHAKLALA',196,40],['C',512,1347,'SCHEME 3',192,40],['C',620,681,'PAF BASE',132,32,0,'#8461c4','i'],['C',620,721,'Nur Khan',140,32,0,'#8461c4','i'],['C',168,132,'سٹلائٹ ٹاؤن',205,36],['C',312,308,'آفندی کالونی',200,36],['C',624,300,'مسلم ٹاون',168,36],['C',220,458,'چاہ سلطان',188,38],['C',146,544,'امرپورہ',105,36],['C',580,842,'چکلالہ کینٹ',212,38],['C',1036,928,'شاہ خالد کالونی',226,34],['C',812,1148,'غریب آباد',150,36],['C',95,1266,'سول لائنز',152,36],['C',205,1330,'پولیس لائنز',182,36],['C',715,32,'علی پور',130,32],
['C',433,270,'Sadiqabad Road',200,28,18,'#333'],['C',810,357,'Khanna Road',165,28,-9,'#333'],['C',1190,295,'Lehtrar Road',150,28,-24,'#333'],['C',398,720,'Chaklala Road',178,28,88,'#333'],['C',380,910,'Tipu Road',120,28,-20,'#333'],['C',325,528,'چاہ سلطان روڈ',150,27,37,'#333'],['C',102,595,'مری روڈ',80,26,-86,'#333'],['C',277,165,'مری روڈ',70,26,-72,'#333'],['C',572,1026,'ایئرپورٹ روڈ',135,27,-5,'#333'],['C',950,828,'ایئرپورٹ روڈ',130,27,24,'#333'],['C',900,140,'زون ۲',80,28,60,'#93719a'],['C',70,75,'روڈ',45,26,40,'#333'],['C',842,38,'way',30,28,60,'#333'],
['D',240,588,'Ghauri Town',238,40],['D',240,640,'Phase 4-A',182,40],['D',178,729,'Ghauri Town',238,40],['D',178,781,'Phase 5',146,40],['D',671,989,'Gulberg Green',278,40],['D',267,1041,'E2',38,34,0,'#8a4536'],['D',690,50,'Lehtrar',80,28,-48,'#333'],['D',418,1295,'Islamabad',130,28,58,'#333'],['D',570,1152,'کورنگ ندی',145,30,-12,'#5f93c4'],['D',40,978,'ایئرپورٹ روڈ',150,27,8,'#333']];
T.forEach(([k,x,y,s,w,z,r=0,c='#444',i])=>out.push(`<text x="${x+OFF[k]}" y="${y+(r?2:0)}" text-anchor="middle" font-family="'Noto Sans','DejaVu Sans',sans-serif" font-size="${r?z+4:z+1}" ${i?'font-style="italic"':''} textLength="${w}" lengthAdjust="spacingAndGlyphs" fill="${c}" stroke="#fff" stroke-opacity="${r?.25:.55}" stroke-width="5" paint-order="stroke" ${r?`transform="rotate(${r} ${x+OFF[k]} ${y-8})"`:''}>${s}</text>`));
const pin=(k,x,y,c='#ef4444')=>out.push(`<path fill="${c}" fill-rule="evenodd" transform="translate(${x+OFF[k]-46.8} ${y-85.8}) scale(3.9)" d="M12 2C8.130 2 5 5.130 5 9c0 5.250 7 13 7 13s7-7.750 7-13c0-3.870-3.130-7-7-7zm0 9.500a2.500 2.500 0 1 1 0-5 2.500 2.500 0 0 1 0 5z"/>`);
[['B',1115,52],['C',344,50],['C',317,146],['C',95,175],['C',300,180],['C',307,212],['C',344,210],['B',1045,394],['B',664,558],['C',223,571],['C',382,643],['B',519,654],['B',1035,714],['C',476,771],['B',174,781],['B',326,858],['B',367,872],['B',470,916],['B',481,924],['B',566,930],['B',620,960],['B',738,1012],['B',1197,1036],['B',985,1042],['B',461,1056],['B',904,1050],['B',917,1080],['B',863,1116],['B',875,1076],['B',1126,1122],['C',91,1190],['B',1163,1258],['B',900,1450],['B',964,1444]].forEach(p=>pin(...p));
pin('C',31,692,'#3b82f6');
document.getElementById('map').innerHTML=out.join('');
</script>
</body>
</html>
